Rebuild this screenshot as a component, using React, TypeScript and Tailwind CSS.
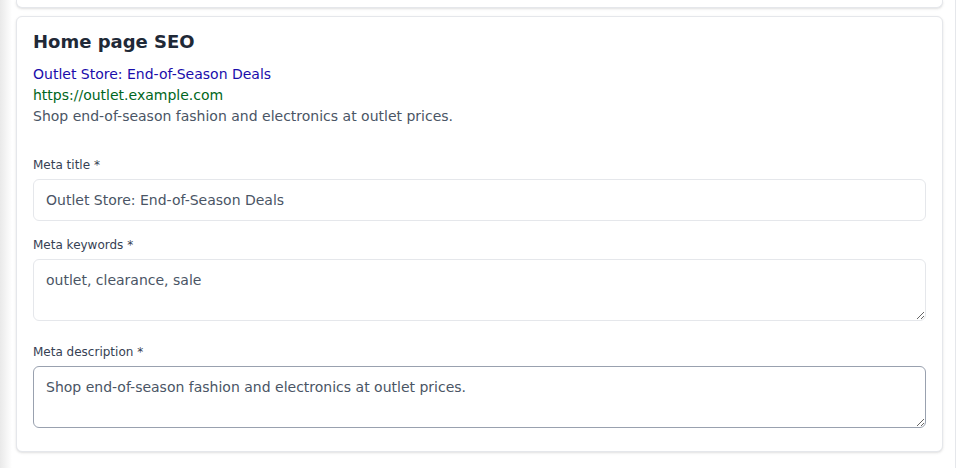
const fields = [
  { label: "Meta title *", value: "Outlet Store: End-of-Season Deals", kind: "input" },
  { label: "Meta keywords *", value: "outlet, clearance, sale", kind: "textarea" },
  { label: "Meta description *", value: "Shop end-of-season fashion and electronics at outlet prices.", kind: "textarea" },
];

export default function App() {
  return (
    <div className="flex h-[468px] w-[960px] overflow-hidden bg-white font-['DejaVu_Sans',sans-serif]">
      <main className="h-full w-[956px] border-r border-gray-200 bg-[linear-gradient(to_right,#e9e9e9,#ffffff_12px)] pl-4 pr-3">
        {/* previous card, only its bottom edge shows */}
        <div className="h-2 rounded-b-md border-x border-b border-gray-200 bg-white shadow-sm" />

        <section className="mt-2 rounded-md border border-gray-200 bg-white px-4 pt-[14px] pb-[23px] shadow-sm">
          <h2 className="text-lg leading-[22px] font-bold text-[#1f2937]">Home page SEO</h2>

          {/* search preview */}
          <div className="mt-[11px] text-sm leading-[21px]">
            <div className="text-[#1a0dab]">Outlet Store: End-of-Season Deals</div>
            <div className="text-[#006621]">https://outlet.example.com</div>
            <div className="text-gray-600">Shop end-of-season fashion and electronics at outlet prices.</div>
          </div>

          <div className="mt-[29px]">
            <label className="mb-[5px] block text-xs leading-[18px] text-gray-700">{fields[0].label}</label>
            <input
              defaultValue={fields[0].value}
              className="block h-[42px] w-full rounded-md border border-gray-200 bg-white px-3 text-sm text-gray-600 outline-none"
            />
          </div>

          <div className="mt-[15px]">
            <label className="mb-[5px] block text-xs leading-[18px] text-gray-700">{fields[1].label}</label>
            <textarea
              defaultValue={fields[1].value}
              className="block h-[62px] w-full rounded-md border border-gray-200 bg-white px-3 py-2.5 text-sm leading-[21px] text-gray-600 outline-none"
            />
          </div>

          <div className="mt-[22px]">
            <label className="mb-[5px] block text-xs leading-[18px] text-gray-700">{fields[2].label}</label>
            <textarea
              defaultValue={fields[2].value}
              className="block h-[62px] w-full rounded-md border border-gray-400 bg-white px-3 py-2.5 text-sm leading-[21px] text-gray-600 outline-none"
            />
          </div>
        </section>
      </main>
    </div>
  );
}
